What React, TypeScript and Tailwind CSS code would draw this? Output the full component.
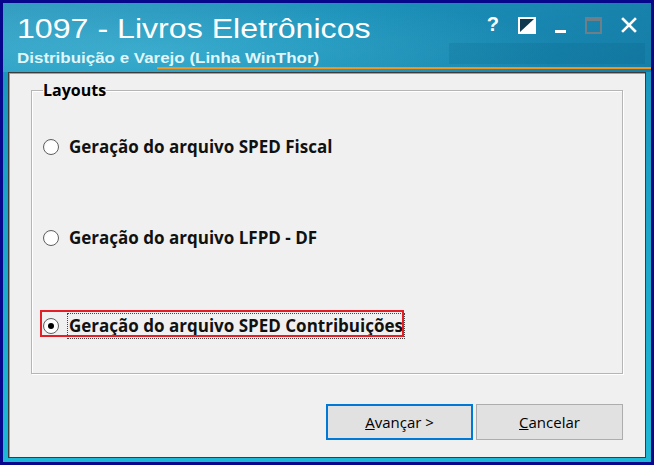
import React from 'react';

const labelFont = { fontFamily: '"Open Sans", "Liberation Sans", sans-serif' };

function Radio({ checked }: { checked?: boolean }) {
    return (
        <span className="flex h-[16px] w-[16px] shrink-0 items-center justify-center rounded-full border border-[#5f5f5f] bg-[radial-gradient(circle_at_60%_60%,#ffffff_55%,#e4e4e4)]">
            {checked && <span className="h-[6px] w-[6px] rounded-full bg-black" />}
        </span>
    );
}

function WindowButtons() {
    return (
        <div className="flex items-start gap-[19px] pt-[14px] pr-[14px]">
            {/* help */}
            <span className="mt-[-3px] text-[20px] font-bold leading-none text-white" style={{ fontFamily: '"Liberation Sans", sans-serif' }}>?</span>
            {/* theme toggle */}
            <svg width="18" height="17" viewBox="0 0 18 17">
                <rect x="1" y="1" width="16" height="15" fill="#10384d" stroke="#fff" strokeWidth="2" />
                <polygon points="16,2 16,15 2,15" fill="#fff" />
            </svg>
            {/* minimise */}
            <svg width="11" height="17" viewBox="0 0 11 17">
                <rect x="0" y="13" width="11" height="3" fill="#fff" />
            </svg>
            {/* maximise, disabled */}
            <svg width="17" height="17" viewBox="0 0 17 17">
                <rect x="1" y="1" width="15" height="15" fill="none" stroke="#6f7f88" strokeWidth="2" />
                <rect x="1" y="1" width="15" height="3" fill="#6f7f88" />
            </svg>
            {/* close */}
            <svg width="16" height="16" viewBox="0 0 16 16">
                <path d="M2 2 L14 14 M14 2 L2 14" stroke="#fff" strokeWidth="2.6" strokeLinecap="square" />
            </svg>
        </div>
    );
}

export default function App() {
    const options = [
        { label: 'Geração do arquivo SPED Fiscal', checked: false, gap: '' },
        { label: 'Geração do arquivo LFPD - DF', checked: false, gap: 'mt-[65px]' },
        { label: 'Geração do arquivo SPED Contribuições', checked: true, gap: 'mt-[62px]' },
    ];

    return (
        <div className="h-[465px] w-[654px] overflow-hidden bg-[#07078c] p-[3px]">
            <div className="flex h-full flex-col bg-[linear-gradient(180deg,#1a8fb8_0%,#1ca4c8_45%,#1db8d6_100%)]">
                {/* cabeçalho */}
                <div className="relative h-[69px] shrink-0 bg-[radial-gradient(ellipse_420px_60px_at_140px_48px,rgba(120,220,240,0.3),transparent),linear-gradient(160deg,rgba(255,255,255,0.1)_0%,transparent_45%,rgba(0,40,90,0.22)_100%)]">
                    <div className="flex justify-between">
                        <div className="pl-[14px] pt-[10px]">
                            <div
                                className="origin-left scale-x-[1.19] whitespace-nowrap text-[27px] leading-[32px] text-white"
                                style={{ fontFamily: '"Liberation Sans", Arial, sans-serif' }}
                            >
                                1097 - Livros Eletrônicos
                            </div>
                            <div
                                className="mt-[5px] origin-left scale-x-[1.13] whitespace-nowrap text-[15px] font-bold leading-[16px] text-[#dff6fb]"
                                style={{ fontFamily: '"Liberation Sans", Arial, sans-serif' }}
                            >
                                Distribuição e Varejo (Linha WinThor)
                            </div>
                        </div>
                        <WindowButtons />
                    </div>
                    <div className="absolute right-[6px] top-[40px] h-[21px] w-[196px] bg-[rgba(0,70,110,0.12)]" />
                    <div className="absolute bottom-[3px] left-[154px] right-0 h-[2px] bg-[#f29420]" />
                </div>

                {/* painel */}
                <div className="mx-[5px] mb-[4px] flex flex-1 flex-col border border-[#3c3c3c] bg-[#f0f0f0] px-[22px] pt-[9px] shadow-[inset_1px_1px_0_#a0a0a0]">
                    <fieldset className="h-[292px] border border-[#b5b5b5] pl-[11px] shadow-[1px_1px_0_#fff,inset_1px_1px_0_#fff]">
                        <legend className="px-0 text-[16px] font-bold leading-[16px] text-black" style={labelFont}>
                            Layouts
                        </legend>
                        <div className="flex flex-col pt-[36px]" style={labelFont}>
                            {options.map((o, i) => (
                                <div key={i} className={`relative flex h-[26px] items-center gap-[9px] ${o.gap}`}>
                                    <Radio checked={o.checked} />
                                    <span
                                        className={`whitespace-nowrap px-[1px] text-[17px] font-bold leading-[24px] text-[#111] ${o.checked ? 'outline outline-1 outline-dotted outline-[#444]' : ''}`}
                                    >
                                        {o.label}
                                    </span>
                                    {o.checked && (
                                        <div className="absolute left-[-3px] top-[-3px] h-[27px] w-[364px] border-2 border-[#e31e24]" />
                                    )}
                                </div>
                            ))}
                        </div>
                    </fieldset>

                    <div className="mt-[30px] flex justify-end gap-[3px] text-[15px] text-black" style={labelFont}>
                        <button className="h-[36px] w-[147px] border-2 border-[#0078d7] bg-[#e1e1e1]">
                            <span className="underline">A</span>vançar &gt;
                        </button>
                        <button className="h-[36px] w-[147px] border border-[#adadad] bg-[#e1e1e1]">
                            <span className="underline">C</span>ancelar
                        </button>
                    </div>
                </div>
            </div>
        </div>
    );
}
